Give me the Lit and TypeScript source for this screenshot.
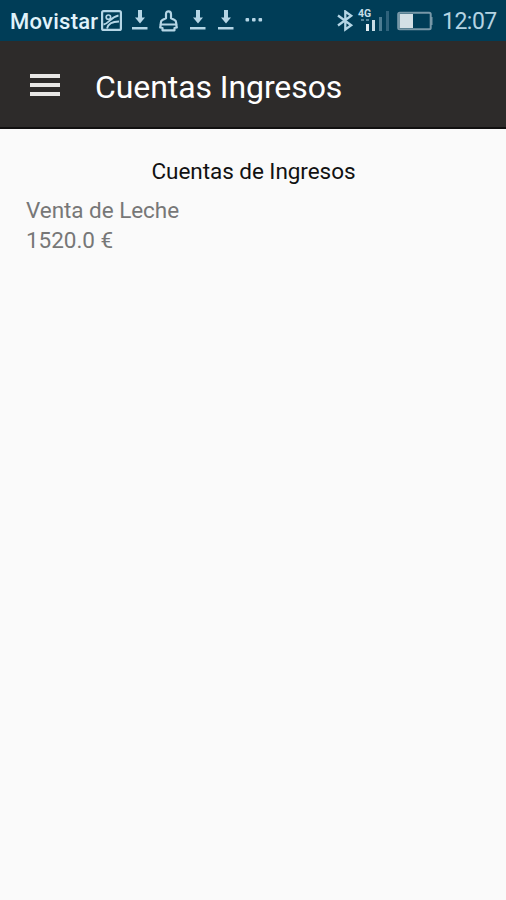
import { LitElement, html, css, svg } from "lit";
import { customElement } from "lit/decorators.js";

const download = html`<svg class="download" width="16" height="21" viewBox="0 0 16 21">
  <path d="M6 0h4v7.400H13L8 13.600 3 7.400h3z" fill="currentColor" />
  <rect x="0" y="17" width="15.500" height="2.500" fill="currentColor" />
</svg>`;

const bars = [
  { x: 8, y: 15, h: 7, c: "#e2edf2" },
  { x: 14, y: 11, h: 11, c: "#c8dde6" },
  { x: 21, y: 8, h: 14, c: "#4d7c92" },
  { x: 28, y: 2, h: 20, c: "#2f627b" },
];

@customElement("status-bar")
class StatusBar extends LitElement {
  static styles = css`
    :host {
      display: flex;
      justify-content: space-between;
      height: 41px;
      box-sizing: border-box;
      padding: 0 10px 0 10px;
      background: #003d57;
      color: #b5d6e6;
      font-family: Roboto, "Noto Sans", sans-serif;
    }
    .group {
      display: flex;
      align-items: center;
      height: 41px;
    }
    .carrier {
      width: 91px;
      padding-top: 1px;
      font-size: 22px;
      font-weight: 500;
      letter-spacing: 0.25px;
      color: #e0f3fb;
      white-space: nowrap;
    }
    svg {
      display: block;
      flex: none;
    }
    .download {
      margin-left: 10px;
    }
    .clean {
      margin-left: 11px;
    }
    .clean + .download {
      margin-left: 10.5px;
    }
    .download + .download {
      margin-left: 12px;
    }
    .more {
      margin-left: 11.5px;
    }
    .signal {
      margin-left: 4px;
      overflow: visible;
    }
    .battery {
      margin-left: 8px;
    }
    .net {
      font-size: 10.5px;
      font-weight: 700;
    }
    .clock {
      margin-left: 9px;
      width: 54px;
      font-size: 23px;
      letter-spacing: -0.5px;
      color: #b4d3e2;
      white-space: nowrap;
      padding-top: 1px;
    }
  `;

  render() {
    return html`
      <div class="group">
        <span class="carrier">Movistar</span>
        <svg width="21" height="21" viewBox="0 0 21 21" fill="none" stroke="currentColor">
          <rect x="1.100" y="1.100" width="18.800" height="18.800" rx="1.500" stroke-width="2.200" />
          <circle cx="7.400" cy="7.200" r="2.200" stroke-width="1.700" />
          <path d="M2.500 14.500C8 13.500 10 7 17.500 5.500M6 18.500C7 14 11 11.500 18 11.500" stroke-width="1.800" />
        </svg>
        ${download}
        <svg class="clean" width="20" height="22" viewBox="0 0 20 22" fill="none" stroke="currentColor" stroke-width="2.200" stroke-linejoin="round">
          <path d="M7 8.300V4.200C7 2.300 8 1.300 9.500 1.300s2.500 1 2.500 2.900v4.100l3.600 1.700c1.200.6 1.600 1.500 1.600 3v1.500H1.800V13c0-1.500.4-2.400 1.600-3z" />
          <path d="M1.800 14L1.200 17.500 3.500 18v2.300H15.500V18l2.300-.5L17.200 14" />
        </svg>
        ${download}${download}
        <svg class="more" width="18" height="21" viewBox="0 0 18 21" fill="currentColor">
          <rect x="0.500" y="8" width="3.600" height="3.400" rx="1" />
          <rect x="7" y="8" width="3.600" height="3.400" rx="1" />
          <rect x="13.500" y="8" width="3.600" height="3.400" rx="1" />
        </svg>
      </div>
      <div class="group">
        <svg width="17" height="22" viewBox="0 0 17 22" fill="none" stroke="currentColor" stroke-width="2.300">
          <path d="M1 5.500L14.200 15.200 8.300 19.500V1.500L14.200 5.800 1 15.500" />
        </svg>
        <svg class="signal" width="31" height="24" viewBox="0 0 31 24">
          <text class="net" x="0" y="8" fill="#c6dfe9">4G</text>
          ${bars.map((b) => svg`<rect x=${b.x} y=${b.y} width="3" height=${b.h} fill=${b.c} />`)}
          <path d="M3 11h3M8 11h3" stroke="#55849a" stroke-width="2" />
        </svg>
        <svg class="battery" width="36" height="20" viewBox="0 0 36 20">
          <rect x="1.200" y="1.700" width="32.500" height="16.600" rx="1.500" fill="none" stroke="#7898a8" stroke-width="2" />
          <rect x="34" y="6" width="1.500" height="8" fill="#7898a8" />
          <rect x="2.500" y="3" width="13.500" height="14" fill="#d3dfe5" />
        </svg>
        <span class="clock">12:07</span>
      </div>
    `;
  }
}

@customElement("app-root")
class AppRoot extends LitElement {
  static styles = css`
    :host {
      display: flex;
      flex-direction: column;
      height: 900px;
      background: #fafafa;
      font-family: Roboto, "Noto Sans", sans-serif;
    }
    .toolbar {
      display: flex;
      align-items: center;
      height: 88px;
      box-sizing: border-box;
      padding: 2px 30px 0;
      background: #2d2b2a;
      border-bottom: 2px solid #111010;
      color: #fff;
    }
    .menu {
      display: flex;
      flex-direction: column;
      gap: 5px;
      width: 30px;
      margin: 0 35px 1px 0;
    }
    .line {
      height: 4px;
      background: #e8e7e5;
    }
    .title {
      margin: 0;
      padding-top: 3px;
      font-size: 32px;
      line-height: 40px;
      font-weight: 400;
      letter-spacing: -0.08px;
      white-space: nowrap;
    }
    .content {
      display: flex;
      flex-direction: column;
      padding: 27px 26px 0;
    }
    .heading {
      margin: 0 0 9px;
      padding-left: 1px;
      text-align: center;
      font-size: 22.500px;
      line-height: 30px;
      font-weight: 400;
      letter-spacing: -0.05px;
      color: #111;
    }
    .row {
      font-size: 22.500px;
      line-height: 30px;
      letter-spacing: -0.050px;
      color: #777;
    }
  `;

  render() {
    return html`
      <status-bar></status-bar>
      <header class="toolbar">
        <div class="menu">
          <div class="line"></div>
          <div class="line"></div>
          <div class="line"></div>
        </div>
        <h1 class="title">Cuentas Ingresos</h1>
      </header>
      <main class="content">
        <h2 class="heading">Cuentas de Ingresos</h2>
        <div class="row">Venta de Leche</div>
        <div class="row">1520.0 €</div>
      </main>
    `;
  }
}
